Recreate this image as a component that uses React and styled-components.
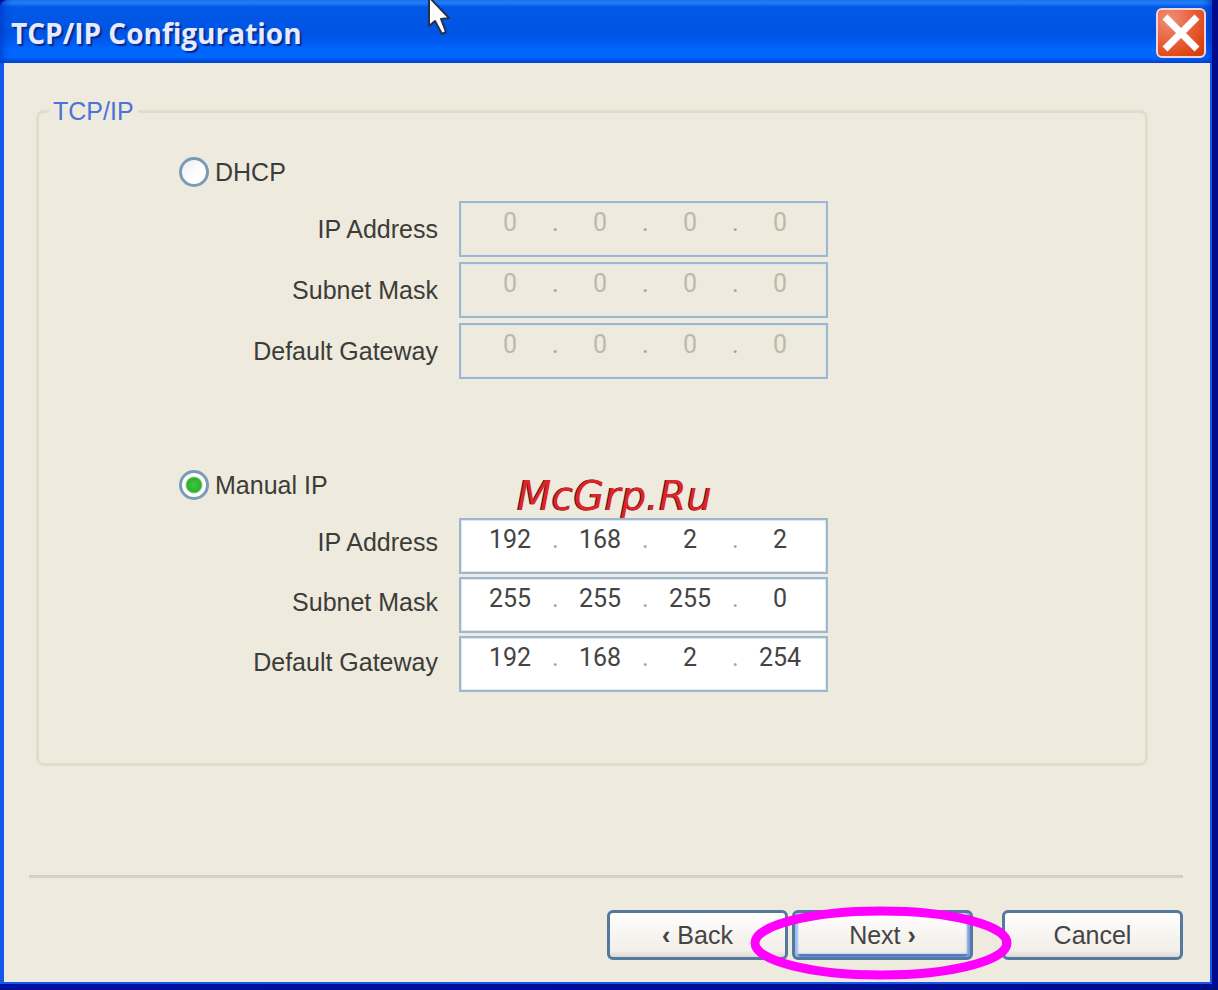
import React, { useState } from 'react';
import styled, { createGlobalStyle } from 'styled-components';

const GlobalStyle = createGlobalStyle`
  * {
    box-sizing: border-box;
  }

  body {
    margin: 0;
    background: #eeeade;
    font-family: 'Liberation Sans', Arial, sans-serif;
    font-size: 25px;
    color: #3c3c38;
  }
`;

const Window = styled.div`
  position: relative;
  display: flex;
  flex-direction: column;
  min-height: 100vh;
  padding: 0 6px 6px 0;
  background: linear-gradient(90deg, #0010a0, #000c8c);
`;

const TitleBar = styled.header`
  display: flex;
  align-items: center;
  justify-content: space-between;
  height: 63px;
  padding: 2px 6px 0 11px;
  border-top-left-radius: 8px;
  background: linear-gradient(
    180deg,
    #2a8cff 0,
    #2385fc 3px,
    #0458e6 7px,
    #0054e3 32px,
    #0058ee 40px,
    #0068ff 50px,
    #0068ff 57px,
    #0048d8 63px
  );
  box-shadow: inset 6px 0 8px -4px #0038c8, inset -6px 0 8px -4px #0030c0;
`;

const Title = styled.h1`
  margin: 0;
  font-family: 'Open Sans', 'Noto Sans', sans-serif;
  font-size: 28px;
  font-weight: 700;
  line-height: 32px;
  color: #e6ecff;
  text-shadow: 2px 2px 1px #0a2a90;
`;

const CloseButton = styled.button`
  width: 50px;
  height: 50px;
  padding: 0;
  border: 2px solid #f2d4d8;
  border-radius: 6px;
  background: radial-gradient(circle at 25% 20%, #f09078 0, #e8623f 45%, #dd4412 80%, #c83a10 100%);

  svg {
    display: block;
    width: 46px;
    height: 46px;
  }
`;

const Body = styled.form`
  flex: 1;
  display: flex;
  flex-direction: column;
  padding: 34px 27px 22px 25px;
  border: solid #1458e8;
  border-width: 0 2px 2px 4px;
  background: #eeeade;
`;

const Panel = styled.fieldset`
  min-width: 0;
  margin: 0 35px 0 7px;
  padding: 32px 24px 71px 140px;
  border: 3px solid #e1ddcb;
  border-radius: 8px;
`;

const Legend = styled.legend`
  margin-left: -130px;
  padding: 0 4px;
  line-height: 28px;
  color: #4a74d8;
`;

const Mode = styled.div`
  & + & {
    margin-top: 91px;
  }
`;

const RadioLabel = styled.label`
  display: flex;
  align-items: center;
  gap: 6px;
  width: fit-content;
  height: 30px;
  line-height: 30px;
`;

const Radio = styled.input`
  appearance: none;
  width: 30px;
  height: 30px;
  margin: 0;
  border: 3px solid #7a9bb8;
  border-radius: 50%;
  background: linear-gradient(135deg, #ececf0, #ffffff 60%);

  &:checked {
    background: radial-gradient(circle, #3cc844 0, #2fae2c 7px, #ffffff 9px);
  }
`;

const Settings = styled.div`
  display: flex;
  gap: 21px;
  margin-top: 14px;
`;

const Labels = styled.div`
  display: flex;
  flex-direction: column;
  gap: ${({ $tight }) => ($tight ? 4 : 5)}px;
  width: 259px;
  text-align: right;
`;

const FieldLabel = styled.label`
  line-height: 56px;
  white-space: nowrap;
`;

const Fields = styled.div`
  display: flex;
  flex-direction: column;
  gap: ${({ $tight }) => ($tight ? 3 : 5)}px;
  margin-top: ${({ $tight }) => ($tight ? 4 : 0)}px;
`;

const AddressBox = styled.div`
  display: flex;
  width: 369px;
  height: 56px;
  padding: 5px 7px;
  border: 2px solid #9db7cf;
  box-shadow: inset 0 0 0 1px #dde6ec;
  background: ${({ $disabled }) => ($disabled ? '#eeeade' : '#ffffff')};
  color: ${({ $disabled }) => ($disabled ? '#bdb9aa' : '#444444')};
  font-family: Roboto, 'Liberation Sans', sans-serif;
  line-height: 30px;
`;

const Octet = styled.input`
  width: 84px;
  height: 30px;
  padding: 0;
  border: 0;
  outline: 0;
  background: transparent;
  color: inherit;
  font: inherit;
  text-align: center;
`;

const Dot = styled.span`
  width: 6px;
  color: #a5a399;
`;

const Footer = styled.footer`
  display: flex;
  justify-content: flex-end;
  gap: 4px;
  margin-top: auto;
  padding-top: 32px;
  border-top: 3px solid #d3d0c5;
`;

const Button = styled.button`
  width: 181px;
  height: 50px;
  padding: 0;
  border: 3px solid #55799c;
  border-radius: 6px;
  background: linear-gradient(180deg, #ffffff, #f5f2ee 60%, #f3efea 85%, #ddd8d0);
  box-shadow: ${({ $primary }) =>
    $primary ? 'inset 3px 0 2px #9dbcf2, inset -3px 0 2px #7c9fe6, inset 0 -3px 1px #4a70c4' : 'none'};
  font: inherit;
  color: #444444;
`;

const Arrow = styled.span`
  font-weight: 700;
`;

const NextWrap = styled.div`
  position: relative;
  margin-right: 25px;
`;

const Highlight = styled.svg`
  position: absolute;
  top: -4px;
  left: -42px;
  z-index: 1;
  pointer-events: none;
`;

const Watermark = styled.div`
  position: absolute;
  top: 472px;
  left: 517px;
  font-family: 'DejaVu Sans', sans-serif;
  font-size: 40px;
  font-style: oblique;
  line-height: 48px;
  color: #de2426;
  text-shadow: -1px 0 0 #3a1c1c;
  pointer-events: none;
`;

const Cursor = styled.svg`
  position: absolute;
  top: 0;
  left: 427px;
  pointer-events: none;
`;

const rows = ['IP Address', 'Subnet Mask', 'Default Gateway'];

const blank = rows.map(() => ['0', '0', '0', '0']);

const manual = [
  ['192', '168', '2', '2'],
  ['255', '255', '255', '0'],
  ['192', '168', '2', '254'],
];

const AddressGroup = ({ id, values, disabled, tight }) => (
  <Settings>
    <Labels $tight={tight}>
      {rows.map((row, i) => (
        <FieldLabel key={row} htmlFor={`${id}-${i}-0`}>
          {row}
        </FieldLabel>
      ))}
    </Labels>
    <Fields $tight={tight}>
      {values.map((octets, i) => (
        <AddressBox key={rows[i]} role="group" aria-label={rows[i]} $disabled={disabled}>
          {octets.map((octet, j) => (
            <React.Fragment key={j}>
              {j > 0 && <Dot>.</Dot>}
              <Octet
                id={`${id}-${i}-${j}`}
                aria-label={j > 0 ? `${rows[i]} part ${j + 1}` : undefined}
                defaultValue={octet}
                maxLength={3}
                disabled={disabled}
              />
            </React.Fragment>
          ))}
        </AddressBox>
      ))}
    </Fields>
  </Settings>
);

const App = () => {
  const [mode, setMode] = useState('manual');

  return (
    <>
      <GlobalStyle />
      <Window>
        <TitleBar>
          <Title>TCP/IP Configuration</Title>
          <CloseButton type="button" aria-label="Close">
            <svg viewBox="0 0 46 46">
              <path d="M7 7 L39 39 M39 7 L7 39" stroke="#ffffff" strokeWidth="7" />
            </svg>
          </CloseButton>
        </TitleBar>

        <Body onSubmit={(e) => e.preventDefault()}>
          <Panel>
            <Legend>TCP/IP</Legend>
            <Mode>
              <RadioLabel>
                <Radio
                  type="radio"
                  name="mode"
                  checked={mode === 'dhcp'}
                  onChange={() => setMode('dhcp')}
                />
                DHCP
              </RadioLabel>
              <AddressGroup id="dhcp" values={blank} disabled />
            </Mode>
            <Mode>
              <RadioLabel>
                <Radio
                  type="radio"
                  name="mode"
                  checked={mode === 'manual'}
                  onChange={() => setMode('manual')}
                />
                Manual IP
              </RadioLabel>
              <AddressGroup id="manual" values={manual} disabled={mode !== 'manual'} tight />
            </Mode>
          </Panel>

          <Footer>
            <Button type="button">
              <Arrow>&lsaquo;</Arrow> Back
            </Button>
            <NextWrap>
              <Button type="submit" $primary>
                Next <Arrow>&rsaquo;</Arrow>
              </Button>
              <Highlight width="262" height="74" viewBox="0 0 262 74">
                <ellipse cx="131" cy="37" rx="126" ry="32" fill="none" stroke="#ff00ff" strokeWidth="9" />
              </Highlight>
            </NextWrap>
            <Button type="button">Cancel</Button>
          </Footer>
        </Body>

        <Watermark>McGrp.Ru</Watermark>
        <Cursor width="26" height="36" viewBox="0 0 26 36">
          <path
            d="M2 -3 V26 L8 21 L15 34 L19 32 L14 19 L22 18 Z"
            fill="#ffffff"
            stroke="#26324a"
            strokeWidth="2"
            strokeLinejoin="round"
          />
        </Cursor>
      </Window>
    </>
  );
};

export default App;
